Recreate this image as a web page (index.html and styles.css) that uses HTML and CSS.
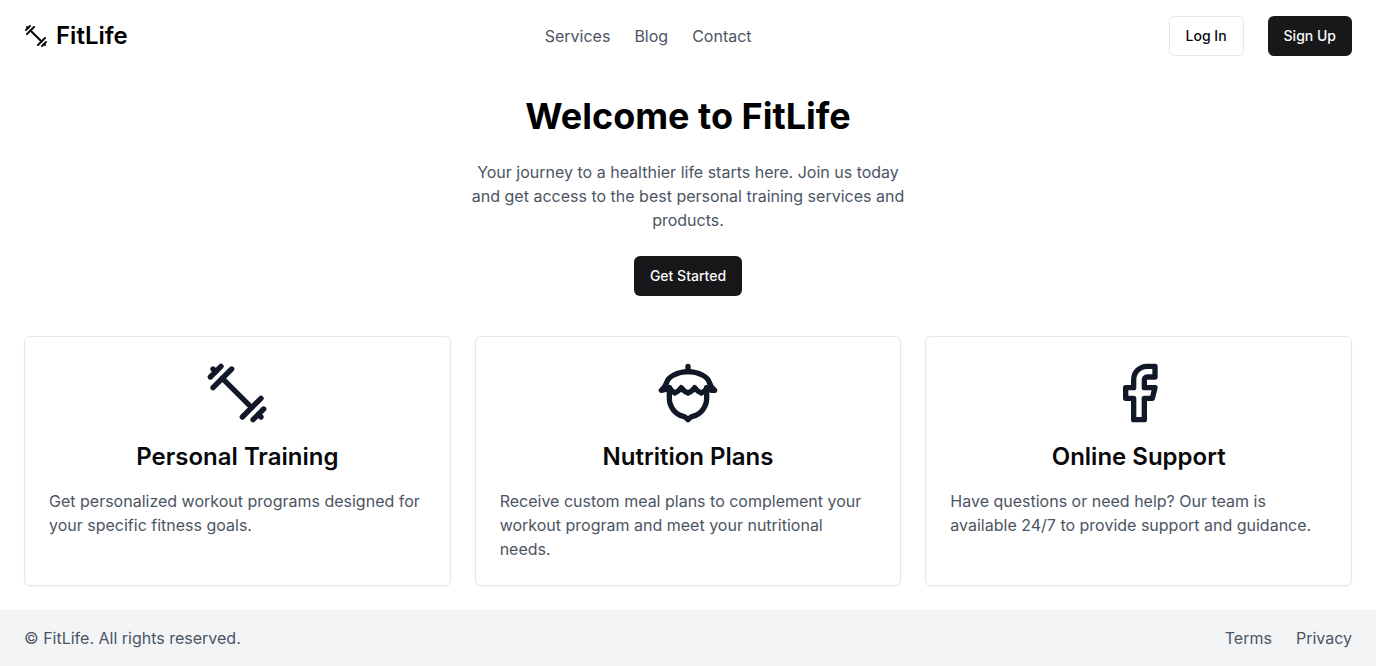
FILE: index.html
```html
<!DOCTYPE html>
<html lang="en">
<head>
<meta charset="utf-8">
<meta name="viewport" content="width=device-width, initial-scale=1">
<title>FitLife</title>
<link rel="stylesheet" href="styles.css">
</head>
<body>
<div class="page">
  <header class="header">
    <a class="brand" href="#">
      <svg class="icon icon-small" viewBox="0 0 24 24" aria-hidden="true"><path d="m6.5 6.5 11 11"/><path d="m21 21-1-1"/><path d="m3 3 1 1"/><path d="m18 22 4-4"/><path d="m2 6 4-4"/><path d="m3 10 7-7"/><path d="m14 21 7-7"/></svg>
      <span>FitLife</span>
    </a>
    <nav class="links">
      <a href="#">Services</a>
      <a href="#">Blog</a>
      <a href="#">Contact</a>
    </nav>
    <div class="actions">
      <button class="button button-outline" type="button">Log In</button>
      <button class="button" type="button">Sign Up</button>
    </div>
  </header>
  <main class="main">
    <section class="hero">
      <h1>Welcome to FitLife</h1>
      <p>Your journey to a healthier life starts here. Join us today and get access to the best personal training services and products.</p>
      <button class="button" type="button">Get Started</button>
    </section>
    <section class="cards">
      <article class="card">
        <svg class="icon icon-large" viewBox="0 0 24 24" aria-hidden="true"><path d="m6.5 6.5 11 11"/><path d="m21 21-1-1"/><path d="m3 3 1 1"/><path d="m18 22 4-4"/><path d="m2 6 4-4"/><path d="m3 10 7-7"/><path d="m14 21 7-7"/></svg>
        <h2>Personal Training</h2>
        <p>Get personalized workout programs designed for your specific fitness goals.</p>
      </article>
      <article class="card">
        <svg class="icon icon-large" viewBox="0 0 24 24" aria-hidden="true"><path d="M12 4V2"/><path d="M5 10v4a7.004 7.004 0 0 0 5.277 6.787c.412.104.802.292 1.102.592L12 22l.621-.621c.3-.3.69-.488 1.102-.592A7.003 7.003 0 0 0 19 14v-4"/><path d="M12 4C8 4 4.5 6 4 8c-.243.97-.919 1.952-2 3 1.31-.082 1.972-.29 3-1 .54.92.982 1.356 2 2 1.452-.647 1.954-1.098 2.5-2 .595.995 1.151 1.427 2.5 2 1.31-.621 1.862-1.058 2.5-2 .629.977 1.162 1.423 2.5 2 1.209-.548 1.68-.967 2-2 1.032.916 1.683 1.157 3 1-1.297-1.036-1.758-2.03-2-3-.5-2-4-4-8-4Z"/></svg>
        <h2>Nutrition Plans</h2>
        <p>Receive custom meal plans to complement your workout program and meet your nutritional needs.</p>
      </article>
      <article class="card">
        <svg class="icon icon-large" viewBox="0 0 24 24" aria-hidden="true"><path d="M18 2h-3a5 5 0 0 0-5 5v3H7v4h3v8h4v-8h3l1-4h-4V7a1 1 0 0 1 1-1h3z"/></svg>
        <h2>Online Support</h2>
        <p>Have questions or need help? Our team is available 24/7 to provide support and guidance.</p>
      </article>
    </section>
  </main>
  <footer class="footer">
    <p>© FitLife. All rights reserved.</p>
    <nav class="links">
      <a href="#">Terms</a>
      <a href="#">Privacy</a>
    </nav>
  </footer>
</div>
</body>
</html>
```
FILE: styles.css
```css
* {
  box-sizing: border-box;
}

body,
h1,
h2,
p {
  margin: 0;
}

body {
  font-family: Inter, "Liberation Sans", sans-serif;
  font-size: 16px;
  line-height: 24px;
  color: #000;
  background: #fff;
}

a {
  color: inherit;
  text-decoration: none;
}

.page {
  display: flex;
  flex-direction: column;
  min-height: 100vh;
}

.header {
  display: flex;
  align-items: center;
  justify-content: space-between;
  padding: 16px 24px;
}

.brand {
  display: flex;
  align-items: center;
  gap: 8px;
  font-size: 24px;
  line-height: 32px;
  font-weight: 600;
}

.icon {
  display: block;
  fill: none;
  stroke: currentColor;
  stroke-width: 2;
  stroke-linecap: round;
  stroke-linejoin: round;
}

.icon-small {
  width: 24px;
  height: 24px;
}

.icon-large {
  width: 64px;
  height: 64px;
  margin: 0 auto 16px;
  color: #111827;
}

.links,
.actions {
  display: flex;
  gap: 24px;
}

.links {
  color: #4b5563;
}

.button {
  height: 40px;
  padding: 0 16px;
  border: 0;
  border-radius: 6px;
  background: #18181b;
  color: #fafafa;
  font-family: inherit;
  font-size: 14px;
  line-height: 20px;
  font-weight: 500;
  cursor: pointer;
}

.button-outline {
  border: 1px solid #e5e7eb;
  background: #fff;
  color: #09090b;
}

.main {
  flex: 1;
  padding: 24px;
}

.hero {
  display: flex;
  flex-direction: column;
  align-items: center;
  text-align: center;
  margin-bottom: 40px;
}

.hero h1 {
  font-size: 36px;
  line-height: 40px;
  font-weight: 700;
  margin-bottom: 24px;
}

.hero p {
  max-width: 448px;
  margin-bottom: 24px;
  color: #4b5563;
}

.cards {
  display: grid;
  grid-template-columns: repeat(3, 1fr);
  gap: 24px;
}

.card {
  padding: 24px;
  border: 1px solid #e5e7eb;
  border-radius: 6px;
  color: #09090b;
  box-shadow: 0 1px 2px rgba(0, 0, 0, 0.05);
}

.card h2 {
  font-size: 24px;
  line-height: 32px;
  font-weight: 600;
  text-align: center;
  margin-bottom: 16px;
}

.card p {
  color: #4b5563;
}

.footer {
  display: flex;
  justify-content: space-between;
  padding: 16px 24px;
  background: #f3f4f6;
  color: #4b5563;
}

@media (max-width: 767px) {
  .cards {
    grid-template-columns: 1fr;
  }
}
```
